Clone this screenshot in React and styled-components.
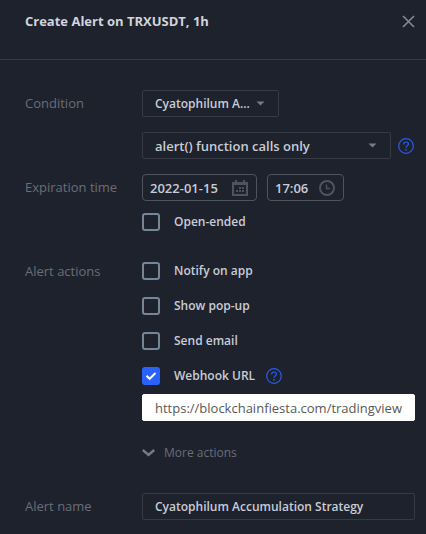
import React, { useState } from "react";
import styled, { createGlobalStyle } from "styled-components";

const GlobalStyle = createGlobalStyle`
    * {
        box-sizing : border-box;
    }

    body {
        margin : 0;
        background-color : #1e222d;
    }

    body, input, select, button {
        font-family : "Open Sans", "Noto Sans", sans-serif;
        font-size : 13px;
        line-height : 18px;
    }
`

const Dialog = styled.main`
    width : 100%;
    color : #c9ccd5;
    background-color : #1e222d;
`

const Header = styled.header`
    display : flex;
    height : 60px;
    padding : 12px 11px 0 25px;
    align-items : flex-start;
    justify-content : space-between;
    border-bottom : 1px solid #363a45;
`

const Title = styled.h1`
    margin : 0;
    font-size : 13px;
    font-weight : 700;
    line-height : 18px;
    color : #d1d4dc;
`

const PlainButton = styled.button`
    display : flex;
    min-height : 18px;
    padding : 0;
    align-items : center;
    gap : 9px;
    border : none;
    background : none;
    color : ${(props) => props.$color};
    cursor : pointer;
`

const HelpButton = styled(PlainButton)`
    padding-right : 1px;
`

const MoreButton = styled(PlainButton)`
    margin-top : 23px;
    align-self : flex-start;
    font-size : 12px;
`

const Form = styled.form`
    display : flex;
    flex-direction : column;
    padding : 30px 11px 13px 25px;
`

const Row = styled.div`
    display : grid;
    grid-template-columns : 117px minmax(0, 1fr);
    margin-top : ${(props) => props.$top || "0"};
`

const RowLabel = styled.label`
    line-height : ${(props) => props.$line || "27px"};
    color : #6a6d78;
`

const Fields = styled.div`
    display : flex;
    min-width : 0;
    flex-direction : column;
    gap : ${(props) => props.$gap || "0"};
`

const Line = styled.div`
    display : flex;
    align-items : center;
    gap : ${(props) => props.$gap || "7px"};
`

const SelectBox = styled.div`
    display : grid;
    width : ${(props) => props.$width || "auto"};
    flex : ${(props) => (props.$width ? "none" : "1")};
    align-items : center;

    > * {
        grid-area : 1 / 1;
    }

    > svg {
        margin-right : 14px;
        justify-self : end;
        pointer-events : none;
    }
`

const Select = styled.select`
    width : 100%;
    height : 27px;
    padding : 0 20px 0 12px;
    appearance : none;
    border : 1px solid #363a45;
    border-radius : 2px;
    background-color : transparent;
    color : #c9ccd5;
    font-size : ${(props) => (props.$small ? "12px" : "13px")};
    font-weight : 600;
    text-overflow : ellipsis;
`

const PickerBox = styled.div`
    display : flex;
    width : ${(props) => props.$width};
    height : 27px;
    padding : 0 8px 0 7px;
    align-items : center;
    border : 1px solid #50535e;
    border-radius : 4px;
    color : #50535e;
`

const PickerInput = styled.input`
    min-width : 0;
    padding : 0;
    flex : 1;
    border : none;
    background : none;
    color : #c9ccd5;
    font-weight : 600;
`

const TextInput = styled.input`
    width : 100%;
    height : 27px;
    padding : 0 12px;
    border : 1px solid ${(props) => (props.$light ? "#ffffff" : "#363a45")};
    border-radius : 2px;
    background-color : ${(props) => (props.$light ? "#ffffff" : "transparent")};
    color : ${(props) => (props.$light ? "#585858" : "#c9ccd5")};
    font-size : ${(props) => (props.$light ? "13px" : "12px")};
    font-weight : ${(props) => (props.$light ? "400" : "600")};
`

const WebhookBox = styled.div`
    display : flex;
    padding-top : 9px;
`

const CheckLabel = styled.label`
    display : flex;
    align-items : center;
    gap : 14px;
    font-size : 12px;
    font-weight : 600;
`

const CheckBox = styled.span`
    display : grid;
    place-items : center;

    > * {
        grid-area : 1 / 1;
    }

    > svg {
        pointer-events : none;
    }
`

const CheckInput = styled.input`
    width : 18px;
    height : 18px;
    margin : 0;
    appearance : none;
    border : 2px solid #758696;
    border-radius : 3px;

    &:checked {
        border-color : #2962ff;
        background-color : #2962ff;
    }
`

const Caret = () => (
    <svg width="9" height="5" viewBox="0 0 9 5" fill="#787b86">
        <path d="M0.5 0.5h8L4.5 4.5z" />
    </svg>
)

const CloseIcon = () => (
    <svg width="13" height="13" viewBox="0 0 13 13" fill="none" stroke="currentColor" strokeWidth="1.6">
        <path d="M1 1l11 11M12 1L1 12" />
    </svg>
)

const HelpIcon = () => (
    <svg width="16" height="16" viewBox="0 0 16 16" fill="none" stroke="currentColor" strokeWidth="1.2">
        <circle cx="8" cy="8" r="7.3" />
        <path d="M5.6 6.4C5.6 4.9 6.5 4 8 4s2.5.9 2.5 2.1c0 1.7-2.5 1.7-2.5 3.7" />
        <path d="M8 11.1v1.5" strokeWidth="1.5" />
    </svg>
)

const CalendarIcon = () => (
    <svg width="16" height="16" viewBox="0 0 16 16" fill="currentColor">
        <path fillRule="evenodd" d="M0 2h3V0h2v2h6V0h2v2h3v14H0zM2 5v9h12V5z" />
        <path d="M7 7h2v2H7zM10 7h2v2h-2zM4 10h2v2H4zM7 10h2v2H7zM10 10h2v2h-2z" />
    </svg>
)

const ClockIcon = () => (
    <svg width="16" height="16" viewBox="0 0 16 16" fill="none" stroke="currentColor">
        <circle cx="8" cy="8" r="7" strokeWidth="2" />
        <path d="M7.5 4.5v4H11" strokeWidth="1.4" />
    </svg>
)

const CheckMark = () => (
    <svg width="12" height="10" viewBox="0 0 12 10" fill="none" stroke="#ffffff" strokeWidth="2">
        <path d="M1.5 4.8l3.2 3L10.5 2" />
    </svg>
)

const ChevronIcon = () => (
    <svg width="13" height="8" viewBox="0 0 13 8" fill="none" stroke="#787b86" strokeWidth="2.4">
        <path d="M0.8 1l5.7 5 5.7-5" />
    </svg>
)

const Help = (props) => (
    <HelpButton type="button" aria-label={props.label} $color="#2a5be8">
        <HelpIcon />
    </HelpButton>
)

const Check = (props) => {
    const [checked, setChecked] = useState(Boolean(props.checked));

    return (
        <CheckLabel>
            <CheckBox>
                <CheckInput type="checkbox" checked={checked} onChange={(e) => setChecked(e.target.checked)} />
                {checked && <CheckMark />}
            </CheckBox>
            {props.children}
        </CheckLabel>
    )
}

const App = () => {
    return (
        <>
            <GlobalStyle />
            <Dialog>
                <Header>
                    <Title>Create Alert on TRXUSDT, 1h</Title>
                    <PlainButton type="button" aria-label="Close" $color="#868993">
                        <CloseIcon />
                    </PlainButton>
                </Header>

                <Form>
                    <Row>
                        <RowLabel htmlFor="condition">Condition</RowLabel>
                        <Fields $gap="15px">
                            <SelectBox $width="137px">
                                <Select id="condition" $small>
                                    <option>Cyatophilum A...</option>
                                </Select>
                                <Caret />
                            </SelectBox>
                            <Line>
                                <SelectBox>
                                    <Select aria-label="Trigger">
                                        <option>alert() function calls only</option>
                                    </Select>
                                    <Caret />
                                </SelectBox>
                                <Help label="About triggers" />
                            </Line>
                        </Fields>
                    </Row>

                    <Row $top="15px">
                        <RowLabel htmlFor="date">Expiration time</RowLabel>
                        <Fields $gap="12px">
                            <Line $gap="10px">
                                <PickerBox $width="115px">
                                    <PickerInput id="date" defaultValue="2022-01-15" />
                                    <CalendarIcon />
                                </PickerBox>
                                <PickerBox $width="77px">
                                    <PickerInput aria-label="Time" defaultValue="17:06" />
                                    <ClockIcon />
                                </PickerBox>
                            </Line>
                            <Check>Open-ended</Check>
                        </Fields>
                    </Row>

                    <Row $top="31px" role="group" aria-labelledby="actions">
                        <RowLabel as="span" id="actions" $line="18px">Alert actions</RowLabel>
                        <Fields>
                            <Fields $gap="17px">
                                <Check>Notify on app</Check>
                                <Check>Show pop-up</Check>
                                <Check>Send email</Check>
                                <Line $gap="11px">
                                    <Check checked>Webhook URL</Check>
                                    <Help label="About webhooks" />
                                </Line>
                            </Fields>
                            <WebhookBox>
                                <TextInput $light aria-label="Webhook URL address" defaultValue="https://blockchainfiesta.com/tradingview" />
                            </WebhookBox>
                            <MoreButton type="button" $color="#6a6d78">
                                <ChevronIcon />
                                More actions
                            </MoreButton>
                        </Fields>
                    </Row>

                    <Row $top="31px">
                        <RowLabel htmlFor="name">Alert name</RowLabel>
                        <TextInput id="name" defaultValue="Cyatophilum Accumulation Strategy" />
                    </Row>
                </Form>
            </Dialog>
        </>
    )
};

export default App;
